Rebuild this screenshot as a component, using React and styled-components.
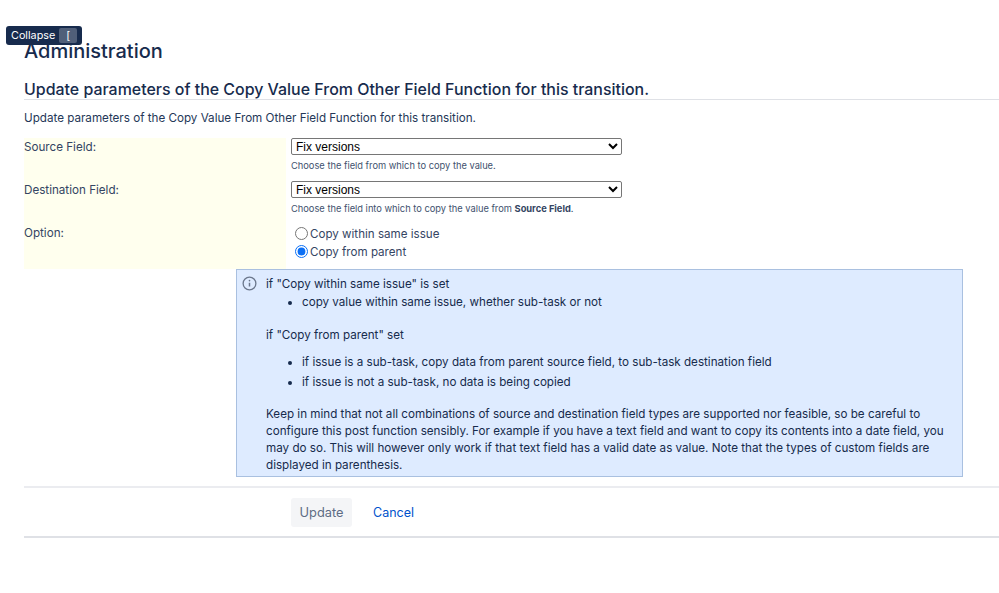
import React from "react";
import styled, { createGlobalStyle } from "styled-components";

const Global = createGlobalStyle`
  html, body { margin: 0; padding: 0; background: #fff; }
  body { font-family: Inter, "Liberation Sans", sans-serif; color: #172b4d; overflow: hidden; }
`;

const Page = styled.div`
  width: 999px;
  height: 593px;
  box-sizing: border-box;
  padding: 39px 0 0 24px;
  position: relative;
  overflow: hidden;
`;

const Tooltip = styled.div`
  position: absolute;
  left: 6px;
  top: 26px;
  width: 76px;
  height: 19px;
  box-sizing: border-box;
  background: #172b4d;
  border-radius: 3px;
  color: #fff;
  font-size: 10.8px;
  display: flex;
  align-items: center;
  padding-left: 5px;
  gap: 4px;
`;

const Key = styled.span`
  width: 18px;
  height: 15px;
  background: #505f79;
  border-radius: 2px;
  text-align: center;
  line-height: 15px;
`;

const Title = styled.h1`
  margin: 0;
  font-size: 20px;
  line-height: 24px;
  font-weight: 500;
  color: #172b4d;
`;

const Heading = styled.h2`
  margin: 17px 0 0;
  font-size: 15.95px;
  line-height: 19px;
  font-weight: 500;
  color: #172b4d;
  border-bottom: 1px solid #dfe1e6;
`;

const Intro = styled.p`
  margin: 10px 0 0;
  font-size: 11.65px;
  line-height: 16px;
  color: #253858;
`;

const Form = styled.div`
  margin-top: 12px;
  display: grid;
  grid-template-columns: 262px 1fr;
  column-gap: 5px;
`;

const Label = styled.div`
  background: #ffffee;
  font-size: 11.65px;
  line-height: 16px;
  height: ${p => p.$h}px;
  box-sizing: border-box;
  padding-top: 1px;
  color: #344563;
`;

const Cell = styled.div`
  height: ${p => p.$h}px;
`;

const Select = styled.select`
  display: block;
  width: 331px;
  height: 17px;
  margin: 0;
  padding: 0;
  font-family: "Liberation Sans", Arial, sans-serif;
  font-size: 12px;
  color: #000;
  background: #fff;
  border: 1px solid #767676;
  border-radius: 2px;
`;

const Help = styled.div`
  margin-top: 5px;
  font-size: 9.3px;
  line-height: 12px;
  color: #42526e;
  b { font-weight: 700; color: #344563; }
`;

const RadioGroup = styled.div`
  padding-top: 1px;
`;

const RadioRow = styled.label`
  display: flex;
  align-items: center;
  height: 18px;
  font-size: 11.6px;
  color: #344563;
`;

const Radio = styled.input`
  width: 13px;
  height: 13px;
  margin: 0 2px 2px 4px;
  accent-color: #0b6ff5;
`;

const Info = styled.div`
  margin-left: 212px;
  width: 727px;
  height: 208px;
  box-sizing: border-box;
  background: #deebff;
  border: 1px solid #a9c0e0;
  padding: 6px 18px 0 29px;
  position: relative;
  font-size: 11.65px;
  line-height: 17px;
  color: #172b4d;
`;

const InfoIcon = styled.svg`
  position: absolute;
  left: 5px;
  top: 6px;
  width: 15px;
  height: 15px;
  color: #6b778c;
`;

const List = styled.ul`
  margin: 0;
  padding: 0 0 0 36px;
  li { margin: 0 0 3px; }
`;

const Para = styled.p`
  margin: ${p => p.$top}px 0 ${p => p.$bottom}px;
`;

const Actions = styled.div`
  margin-top: 9px;
  border-top: 2px solid #ebecf0;
  border-bottom: 2px solid #dfe1e6;
  height: 48px;
  box-sizing: content-box;
  display: flex;
  align-items: center;
  padding: 0 0 0 267px;
  gap: 21px;
`;

const Button = styled.button`
  width: 61px;
  height: 29px;
  border: 0;
  border-radius: 3px;
  background: #f4f5f7;
  color: #5e6c84;
  font: 400 12.8px Inter, sans-serif;
`;

const CancelLink = styled.a`
  color: #0052cc;
  font-size: 12.5px;
  font-weight: 400;
`;

export default function App() {
  return (
    <Page>
      <Global />
      <Tooltip>Collapse <Key>[</Key></Tooltip>
      <Title>Administration</Title>
      <Heading>Update parameters of the Copy Value From Other Field Function for this transition.</Heading>
      <Intro>Update parameters of the Copy Value From Other Field Function for this transition.</Intro>
      <Form>
        <Label $h={43}>Source Field:</Label>
        <Cell $h={43}>
          <Select defaultValue="f"><option value="f">Fix versions</option></Select>
          <Help>Choose the field from which to copy the value.</Help>
        </Cell>
        <Label $h={43}>Destination Field:</Label>
        <Cell $h={43}>
          <Select defaultValue="f"><option value="f">Fix versions</option></Select>
          <Help>Choose the field into which to copy the value from <b>Source Field</b>.</Help>
        </Cell>
        <Label $h={45}>Option:</Label>
        <Cell $h={45}>
          <RadioGroup>
            <RadioRow><Radio type="radio" name="o" />Copy within same issue</RadioRow>
            <RadioRow><Radio type="radio" name="o" defaultChecked />Copy from parent</RadioRow>
          </RadioGroup>
        </Cell>
      </Form>
      <Info>
        <InfoIcon viewBox="0 0 16 16" fill="none" stroke="currentColor">
          <circle cx="8" cy="8" r="6.8" strokeWidth="1.4" />
          <path d="M8 7.2v4" strokeWidth="1.6" />
          <circle cx="8" cy="4.9" r="0.9" fill="currentColor" stroke="none" />
        </InfoIcon>
        <Para $top={0} $bottom={1}>if "Copy within same issue" is set</Para>
        <List><li>copy value within same issue, whether sub-task or not</li></List>
        <Para $top={16} $bottom={10}>if "Copy from parent" set</Para>
        <List>
          <li>if issue is a sub-task, copy data from parent source field, to sub-task destination field</li>
          <li>if issue is not a sub-task, no data is being copied</li>
        </List>
        <Para $top={15} $bottom={0}>Keep in mind that not all combinations of source and destination field types are supported nor feasible, so be careful to configure this post function sensibly. For example if you have a text field and want to copy its contents into a date field, you may do so. This will however only work if that text field has a valid date as value. Note that the types of custom fields are displayed in parenthesis.</Para>
      </Info>
      <Actions>
        <Button>Update</Button>
        <CancelLink>Cancel</CancelLink>
      </Actions>
    </Page>
  );
}
